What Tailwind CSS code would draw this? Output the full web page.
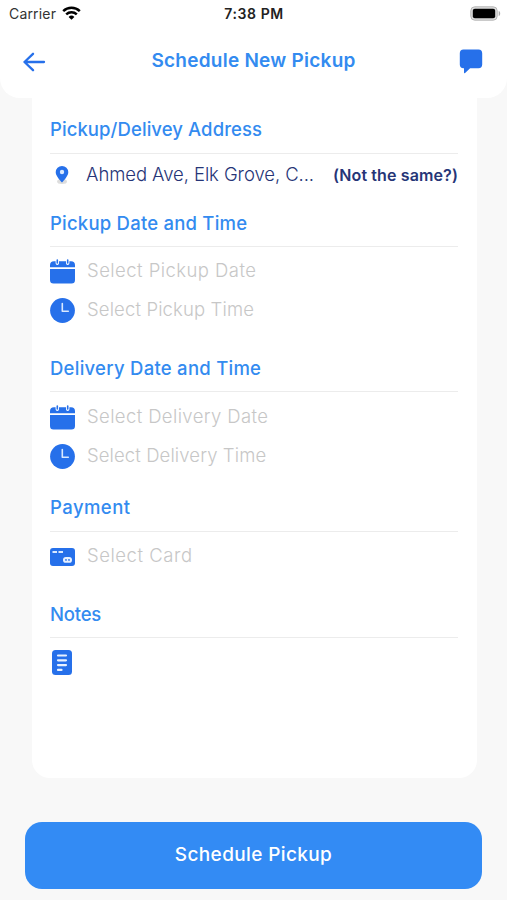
<!DOCTYPE html>
<html lang="en">
<head>
<meta charset="utf-8">
<title>Schedule New Pickup</title>
<script src="https://cdn.jsdelivr.net/npm/@tailwindcss/browser@4"></script>
</head>
<body class="w-[507px] h-[900px] overflow-hidden bg-[#f8f8f8] font-['Inter','Liberation_Sans',sans-serif]">
<svg class="hidden">
  <symbol id="cal" viewBox="0 0 25 25"><path fill="#2670ea" d="M4 2.200h17a4 4 0 0 1 4 4V8.200H0V6.200a4 4 0 0 1 4-4ZM0 10h25v11a3.500 3.500 0 0 1-3.500 3.500H3.500A3.500 3.500 0 0 1 0 21Z"/><path stroke="#fff" stroke-width="3.400" stroke-linecap="round" d="M7.300 2v2.300M17.700 2v2.300"/><path stroke="#2670ea" stroke-width="1.600" stroke-linecap="round" d="M7.300 1v3M17.700 1v3"/></symbol>
  <symbol id="clock" viewBox="0 0 25 25"><circle cx="12.500" cy="12.500" r="12.400" fill="#2670ea"/><path fill="none" stroke="#d9e9ff" stroke-width="1.600" stroke-linecap="round" stroke-linejoin="round" d="M12.300 5.500v7.700h6"/></symbol>
</svg>
<header class="h-[98px] bg-white rounded-b-[20px]">
  <div class="h-[28px] grid grid-cols-3 items-center pl-[9px] pr-[6px] text-[14px] leading-[28px]">
    <div class="flex items-center gap-[6px] text-[#333]"><span class="tracking-[0.18px]">Carrier</span>
      <svg class="w-[19px] h-[14px] -mt-[3px]" viewBox="0 0 19 14" fill="none" stroke="#000" stroke-width="2.500"><path d="M1.200 5.200a12 12 0 0 1 16.600 0M4.200 8.300a7.700 7.700 0 0 1 10.600 0"/><path fill="#000" stroke="none" d="M9.500 13.800 6.600 10.900a4.200 4.200 0 0 1 5.800 0Z"/></svg></div>
    <div class="text-center font-semibold text-[#222] -ml-[2px]"><span class="tracking-[0.6px]">7:38 PM</span></div>
    <svg class="justify-self-end w-[31px] h-[15px] -mt-[2px]" viewBox="0 0 31 15"><rect x=".8" y=".8" width="26.400" height="13.400" rx="4" fill="#ddd" stroke="#b5b5b5"/><rect x="2.800" y="2.800" width="22.400" height="9.400" rx="2" fill="#000"/><path fill="#aaa" d="M28.700 5c2 .6 2 4.400 0 5Z"/></svg>
  </div>
  <div class="h-[66px] flex items-center justify-between pl-[23px] pr-[24px]">
    <svg class="w-[23px] h-[20px] mt-[2px]" viewBox="0 0 23 20" fill="none" stroke="#2670ea" stroke-width="2.300" stroke-linecap="round" stroke-linejoin="round"><path d="M21 10H1.500M10 1.800 1.500 10l8.500 8.200"/></svg>
    <h1 class="text-[19px] font-semibold text-[#338bf0] tracking-[0.25px] ml-[2px]">Schedule New Pickup</h1>
    <svg class="w-[24px] h-[25px] mt-[1px]" viewBox="0 0 24 25"><path fill="#2670ea" d="M4.500.5h15A3.800 3.800 0 0 1 23.200 4.300v11.200a3.800 3.800 0 0 1-3.700 3.800h-8.400l-5 4.800q-1 .7-1.100-.5v-4.300h-.5A3.800 3.800 0 0 1 .8 15.500V4.300A3.800 3.800 0 0 1 4.500.5Z"/></svg>
  </div>
</header>
<main class="w-[445px] h-[680px] ml-[32px] pl-[18px] pr-[19px] bg-white rounded-b-[18px] text-[18.500px] text-[#c7c7c7] font-light whitespace-nowrap">
  <section class="h-[93px]">
    <h2 class="h-[56px] pt-[17px] leading-[28px] border-b border-[#ececec] font-medium text-[#338bf0] tracking-[0.08px]">Pickup/Delivey Address</h2>
    <div class="flex items-center h-[42px] text-[#263577]">
      <svg class="w-[24px] h-[26px] mr-[12px]" viewBox="0 0 24 26"><ellipse cx="12" cy="19.500" rx="5" ry="2.500" fill="#ddd"/><path fill="#2670ea" d="M12 4a6.300 6.300 0 0 0-6.300 6.300C5.700 14.500 12 20.500 12 20.500s6.300-6 6.300-10.200A6.300 6.300 0 0 0 12 4Z"/><circle cx="12" cy="10" r="2.200" fill="#d9e9ff"/></svg>
      <span class="tracking-[-0.08px]">Ahmed Ave, Elk Grove, C...</span>
      <span class="ml-auto text-[16px] font-semibold tracking-[0.12px]">(Not the same?)</span>
    </div>
  </section>
  <section class="h-[145px]">
    <h2 class="h-[56px] pt-[18px] leading-[28px] border-b border-[#ececec] font-medium text-[#338bf0] tracking-[0.22px]">Pickup Date and Time</h2>
    <div class="flex items-center gap-[12px] h-[39px] mt-[5px]"><svg class="w-[25px] h-[25px]"><use href="#cal"/></svg><span class="tracking-[0.45px] -mt-[2px]">Select Pickup Date</span></div>
    <div class="flex items-center gap-[12px] h-[39px]"><svg class="w-[25px] h-[25px]"><use href="#clock"/></svg><span class="tracking-[0.13px] -mt-[2px]">Select Pickup Time</span></div>
  </section>
  <section class="h-[139px]">
    <h2 class="h-[56px] pt-[18px] leading-[28px] border-b border-[#ececec] font-medium text-[#338bf0] tracking-[0.26px]">Delivery Date and Time</h2>
    <div class="flex items-center gap-[12px] h-[39px] mt-[6px]"><svg class="w-[25px] h-[25px]"><use href="#cal"/></svg><span class="tracking-[0.38px] -mt-[2px]">Select Delivery Date</span></div>
    <div class="flex items-center gap-[12px] h-[39px]"><svg class="w-[25px] h-[25px]"><use href="#clock"/></svg><span class="tracking-[0.1px] -mt-[2px]">Select Delivery Time</span></div>
  </section>
  <section class="h-[107px]">
    <h2 class="h-[57px] pt-[18px] leading-[28px] border-b border-[#ececec] font-medium text-[#338bf0] tracking-[0.44px]">Payment</h2>
    <div class="flex items-center gap-[12px] h-[39px] mt-[5px]"><svg class="w-[25px] h-[18px]" viewBox="0 0 25 18"><rect width="25" height="18" rx="3" fill="#2670ea"/><path stroke="#d9e9ff" stroke-width="1.800" d="M2.500 4h4.500M8.500 4h4.500"/><rect x="13" y="9" width="9" height="5.800" rx="2.900" fill="#e8f1ff"/><circle cx="16" cy="11.900" r=".9" fill="#2670ea"/><circle cx="19" cy="11.900" r=".9" fill="#2670ea"/></svg><span class="tracking-[0.54px] -mt-[2px]">Select Card</span></div>
  </section>
  <section>
    <h2 class="h-[56px] pt-[18px] leading-[28px] border-b border-[#ececec] font-medium text-[#338bf0] tracking-[-0.2px]">Notes</h2>
    <svg class="w-[20px] h-[25px] ml-[2px] mt-[12px]" viewBox="0 0 20 25"><rect width="20" height="25" rx="3.500" fill="#2670ea"/><path stroke="#e8f1ff" stroke-width="2.200" stroke-linecap="round" d="M6 5.500h8M6 10.300h8M6 15.100h8M6 19.900h3.500"/></svg>
  </section>
</main>
<button class="block w-[457px] h-[67px] ml-[25px] mt-[44px] rounded-[17px] bg-[#338bf4] text-white text-[19px] font-medium tracking-[0.37px]">Schedule Pickup</button>
</body>
</html>
